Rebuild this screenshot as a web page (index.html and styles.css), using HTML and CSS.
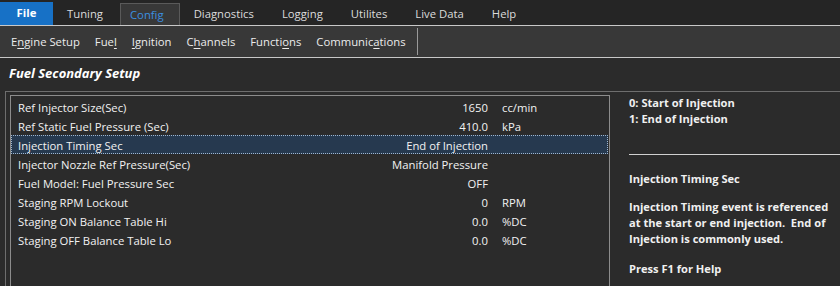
FILE: index.html
```html
<!DOCTYPE html>
<html lang="en">
<head>
    <meta charset="UTF-8">
    <title>Fuel Secondary Setup</title>
    <link rel="stylesheet" href="styles.css">
</head>
<body>
    <div class="menubar">
        <span class="tab tab-file">File</span>
        <span class="tab">Tuning</span>
        <span class="tab tab-active">Config</span>
        <span class="tab">Diagnostics</span>
        <span class="tab">Logging</span>
        <span class="tab">Utilites</span>
        <span class="tab">Live Data</span>
        <span class="tab">Help</span>
    </div>
    <div class="toolbar">
        <span class="tool">E<u>n</u>gine Setup</span>
        <span class="tool">Fue<u>l</u></span>
        <span class="tool"><u>I</u>gnition</span>
        <span class="tool">C<u>h</u>annels</span>
        <span class="tool">Functi<u>o</u>ns</span>
        <span class="tool">Communic<u>a</u>tions</span>
        <span class="tool-sep"></span>
    </div>
    <div class="titlebar">Fuel Secondary Setup</div>
    <div class="group">
        <div class="list">
            <div class="row"><span class="label">Ref Injector Size(Sec)</span><span class="value">1650</span><span class="unit">cc/min</span></div>
            <div class="row"><span class="label">Ref Static Fuel Pressure (Sec)</span><span class="value">410.0</span><span class="unit">kPa</span></div>
            <div class="row selected"><span class="label">Injection Timing Sec</span><span class="value">End of Injection</span><span class="unit"></span></div>
            <div class="row"><span class="label">Injector Nozzle Ref Pressure(Sec)</span><span class="value">Manifold Pressure</span><span class="unit"></span></div>
            <div class="row"><span class="label">Fuel Model: Fuel Pressure Sec</span><span class="value">OFF</span><span class="unit"></span></div>
            <div class="row"><span class="label">Staging RPM Lockout</span><span class="value">0</span><span class="unit">RPM</span></div>
            <div class="row"><span class="label">Staging ON Balance Table Hi</span><span class="value">0.0</span><span class="unit">%DC</span></div>
            <div class="row"><span class="label">Staging OFF Balance Table Lo</span><span class="value">0.0</span><span class="unit">%DC</span></div>
        </div>
        <div class="help">
            <p class="options">0: Start of Injection<br>1: End of Injection</p>
            <hr class="help-rule">
            <p class="help-title">Injection Timing Sec</p>
            <p class="help-text">Injection Timing event is referenced at the start or end injection.&nbsp; End of Injection is commonly used.</p>
            <p class="help-key">Press F1 for Help</p>
        </div>
    </div>
</body>
</html>
```

FILE: styles.css
```css
:root {
    --menu-bg: #252525;
    --tool-bg: #383838;
    --page-bg: #2b2b2b;
    --text: #f2f2f2;
    --text-dim: #dcdcdc;
    --line-light: #c8c8c8;
    --blue: #1771c6;
}
body {
    margin: 0;
    width: 840px;
    height: 286px;
    overflow: hidden;
    background-color: var(--page-bg);
    color: var(--text);
    font-family: 'Open Sans', sans-serif;
    font-size: 11.3px;
}
.menubar {
    display: flex;
    align-items: flex-end;
    height: 25px;
    background-color: var(--menu-bg);
    border-bottom: 1px solid var(--line-light);
}
.tab {
    padding: 0 14px;
    height: 22px;
    line-height: 21px;
    color: var(--text-dim);
    box-sizing: border-box;
}
.tab-file {
    height: 23px;
    width: 53px;
    padding: 0;
    text-align: center;
    background-color: var(--blue);
    color: #fff;
    font-weight: 700;
}
.tab-active {
    background-color: var(--tool-bg);
    color: #3b8fe0;
    border: 1px solid #5a5a5a;
    border-bottom: none;
    margin-left: 3px;
    padding: 0 15px 0 9px;
}
.toolbar {
    display: flex;
    align-items: center;
    gap: 15px;
    height: 31px;
    padding-left: 11px;
    background-color: var(--tool-bg);
    border-bottom: 1px solid var(--line-light);
    color: #ececec;
}
.tool u {
    text-underline-offset: 2px;
}
.tool-sep {
    width: 1px;
    height: 27px;
    margin-left: -4px;
    background-color: #9a9a9a;
}
.titlebar {
    height: 33px;
    line-height: 30px;
    padding-left: 9px;
    font-weight: 700;
    font-style: italic;
    font-size: 13px;
    color: #fff;
}
.group {
    display: flex;
    margin-left: 5px;
    padding: 3px 0 0 4px;
    border-top: 1px solid #6e6e6e;
    border-left: 1px solid #6e6e6e;
    height: 200px;
}
.list {
    width: 600px;
    box-sizing: border-box;
    border: 1px solid #8c8c8c;
    padding-top: 1px;
    flex-shrink: 0;
}
.row {
    display: flex;
    height: 19px;
    line-height: 19px;
    box-sizing: border-box;
    border: 1px solid transparent;
    margin-right: 1px;
}
.row.selected {
    background-color: #26394f;
    border: 1px dotted #9fb6cf;
}
.label {
    flex: 1;
    padding-left: 6px;
}
.value {
    width: 220px;
    text-align: right;
}
.unit {
    width: 105px;
    padding-left: 14px;
}
.help {
    flex: 1;
    padding-left: 19px;
    font-weight: 700;
    font-size: 11.1px;
    line-height: 16px;
    color: #f0f0f0;
}
.help p {
    margin: 0;
}
.help-rule {
    margin: 27px 0 0 0;
    border: none;
    border-top: 1px solid #d0d0d0;
}
.help-title {
    margin-top: 16px !important;
}
.help-text {
    margin-top: 12px !important;
}
.help-key {
    margin-top: 14px !important;
}
```
